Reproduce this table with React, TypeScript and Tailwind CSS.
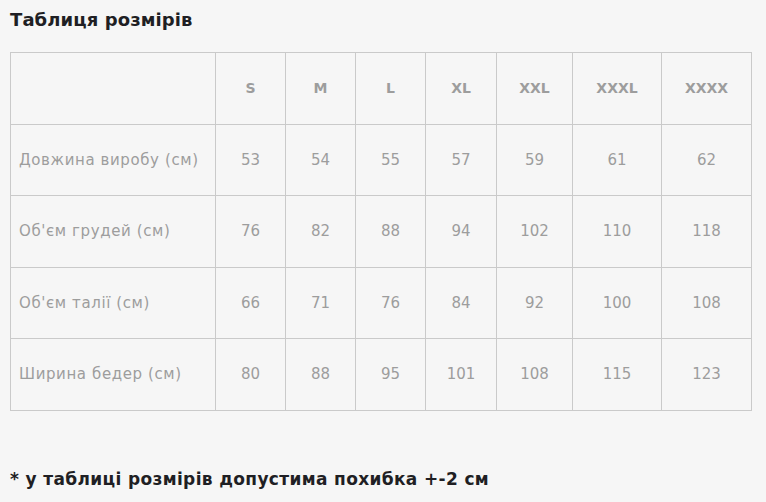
const sizes = ["S", "M", "L", "XL", "XXL", "XXXL", "XXXX"];

const rows: { label: string; values: string[] }[] = [
  { label: "Довжина виробу (см)", values: ["53", "54", "55", "57", "59", "61", "62"] },
  { label: "Об'єм грудей (см)", values: ["76", "82", "88", "94", "102", "110", "118"] },
  { label: "Об'єм талії (см)", values: ["66", "71", "76", "84", "92", "100", "108"] },
  { label: "Ширина бедер (см)", values: ["80", "88", "95", "101", "108", "115", "123"] },
];

const rowHeights = ["h-[70px]", "h-[71px]", "h-[70px]", "h-[71px]"];

export default function App() {
  return (
    <div
      className="min-h-[502px] w-[766px] bg-[#f6f6f6] px-[10px] text-[#9d9d9d]"
      style={{ fontFamily: '"DejaVu Sans", "Open Sans", sans-serif' }}
    >
      <h2 className="pt-[7px] text-[18px] font-bold leading-[25px] tracking-[0.1px] text-[#1f1f24]">
        Таблиця розмірів
      </h2>

      {/* size grid: bg shows through the 1px gaps as cell borders */}
      <div className="mt-[20px] grid w-[742px] grid-cols-[204px_69px_69px_69px_70px_75px_88px_89px] gap-px bg-[#cacaca] p-px">
        <div className="h-[71px] bg-[#f6f6f6]" />
        {sizes.map((s) => (
          <div key={s} className="flex h-[71px] items-center justify-center bg-[#f6f6f6] text-[14px] font-bold">
            {s}
          </div>
        ))}
        {rows.map((r, i) => (
          <div key={r.label} className="contents">
            <div className={`flex ${rowHeights[i]} items-center bg-[#f6f6f6] pl-[8px] text-[15px] tracking-[0.6px]`}>
              {r.label}
            </div>
            {r.values.map((v, j) => (
              <div
                key={j}
                className={`flex ${rowHeights[i]} items-center justify-center bg-[#f6f6f6] text-[15px]`}
              >
                {v}
              </div>
            ))}
          </div>
        ))}
      </div>

      <p className="mt-[56px] text-[17px] font-bold leading-[25px] tracking-[0.35px] text-[#1f1f24]">
        * у таблиці розмірів допустима похибка +-2 см
      </p>
    </div>
  );
}
